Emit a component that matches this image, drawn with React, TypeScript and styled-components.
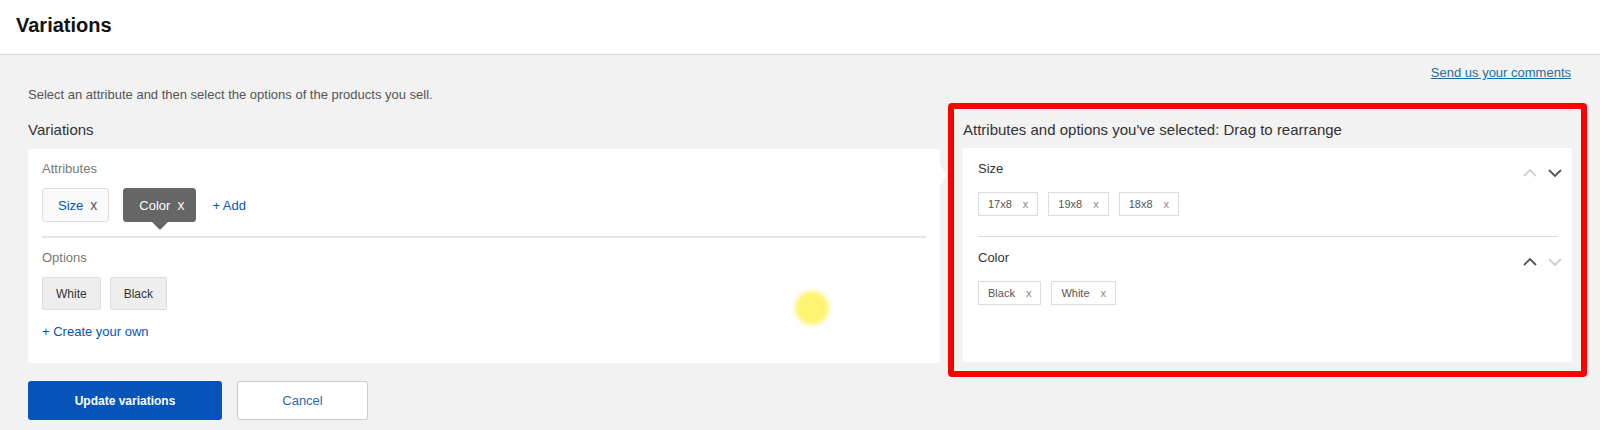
import styled, { createGlobalStyle } from "styled-components";

const GlobalStyle = createGlobalStyle`
	* {
		box-sizing: border-box;
	}

	body {
		margin: 0;
		font-family: "Liberation Sans", Arial, sans-serif;
		background: #f2f2f2;
	}
`;

const sizes = ["17x8", "19x8", "18x8"];
const colors = ["Black", "White"];

type ArrowProps = {
	up?: boolean;
	muted?: boolean;
};

const Chevron = ({ up, muted }: ArrowProps) => (
	<svg width="14" height="8" viewBox="0 0 14 8">
		<polyline
			points={up ? "1,7 7,1 13,7" : "1,1 7,7 13,1"}
			fill="none"
			stroke={muted ? "#cfcfcf" : "#555"}
			strokeWidth="1.8"
		/>
	</svg>
);

type GroupProps = {
	title: string;
	items: string[];
	first?: boolean;
};

const SelectedGroup = ({ title, items, first }: GroupProps) => (
	<Group $first={first}>
		<GroupHeader>
			<GroupTitle>{title}</GroupTitle>
			<Arrows>
				<Chevron up muted={first} />
				<Chevron muted={!first} />
			</Arrows>
		</GroupHeader>
		<ChipRow $gap={10}>
			{items.map((item) => (
				<ValueChip key={item}>
					{item}
					<SmallRemove>x</SmallRemove>
				</ValueChip>
			))}
		</ChipRow>
	</Group>
);

const App = () => {
	return (
		<Page>
			<GlobalStyle />
			<Header>
				<Title>Variations</Title>
			</Header>
			<Main>
				<LeftColumn>
					<Intro>Select an attribute and then select the options of the products you sell.</Intro>
					<Heading>Variations</Heading>
					<Panel>
						<PanelSection>
							<FieldLabel>Attributes</FieldLabel>
							<ChipRow $gap={14}>
								<AttributeChip>
									Size
									<Remove>x</Remove>
								</AttributeChip>
								<AttributeChip $active>
									Color
									<Remove $active>x</Remove>
								</AttributeChip>
								<AddLink>+ Add</AddLink>
							</ChipRow>
						</PanelSection>
						<Divider />
						<PanelSection $bottom>
							<FieldLabel>Options</FieldLabel>
							<ChipRow $gap={9}>
								<OptionChip>White</OptionChip>
								<OptionChip>Black</OptionChip>
							</ChipRow>
							<CreateLink>+ Create your own</CreateLink>
						</PanelSection>
						<PanelPointer />
					</Panel>
					<Actions>
						<PrimaryButton>Update variations</PrimaryButton>
						<SecondaryButton>Cancel</SecondaryButton>
					</Actions>
				</LeftColumn>
				<RightColumn>
					<CommentsLink href="#">Send us your comments</CommentsLink>
					<SelectedBox>
						<Heading>Attributes and options you've selected: Drag to rearrange</Heading>
						<SelectedCard>
							<SelectedGroup title="Size" items={sizes} first />
							<ThinDivider />
							<SelectedGroup title="Color" items={colors} />
						</SelectedCard>
					</SelectedBox>
				</RightColumn>
			</Main>
			<CursorHighlight />
		</Page>
	);
};

const Page = styled.div`
	position: relative;
	min-height: 100vh;
	background: #f2f2f2;
`;

const Header = styled.header`
	height: 55px;
	padding: 13px 16px 0;
	background: #fff;
	border-bottom: 1px solid #d6d6d6;
`;

const Title = styled.h1`
	margin: 0;
	font-size: 20px;
	line-height: 24px;
	font-weight: bold;
	color: #111;
`;

const Main = styled.main`
	display: grid;
	grid-template-columns: 912px 639px;
	column-gap: 8px;
	align-items: start;
	padding: 10px 13px 0 28px;
`;

const LeftColumn = styled.div`
	display: flex;
	flex-direction: column;
	padding-top: 22px;
`;

const RightColumn = styled.div`
	display: flex;
	flex-direction: column;
`;

const Intro = styled.p`
	margin: 0 0 18px;
	font-size: 13px;
	line-height: 16px;
	color: #555;
`;

const Heading = styled.h2`
	margin: 0;
	font-size: 15px;
	line-height: 18px;
	font-weight: normal;
	color: #333;
`;

const Panel = styled.div`
	position: relative;
	margin-top: 10px;
	background: #fff;
`;

const PanelSection = styled.div<{ $bottom?: boolean }>`
	display: flex;
	flex-direction: column;
	align-items: flex-start;
	padding: 12px 14px ${({ $bottom }) => ($bottom ? "23px" : "14px")};
`;

const PanelPointer = styled.div`
	position: absolute;
	top: 16px;
	right: -7px;
	width: 0;
	height: 0;
	border-top: 10px solid transparent;
	border-bottom: 10px solid transparent;
	border-left: 7px solid #fff;
`;

const FieldLabel = styled.div`
	font-size: 13px;
	line-height: 16px;
	color: #777;
	margin-bottom: 11px;
`;

const ChipRow = styled.div<{ $gap: number }>`
	display: flex;
	align-items: center;
	gap: ${({ $gap }) => $gap}px;
`;

const AttributeChip = styled.div<{ $active?: boolean }>`
	position: relative;
	display: flex;
	align-items: center;
	height: 34px;
	padding: 0 11px 0 15px;
	font-size: 13px;
	border: 1px solid ${({ $active }) => ($active ? "#666" : "#ddd")};
	border-radius: 3px;
	background: ${({ $active }) => ($active ? "#666" : "#fafafa")};
	color: ${({ $active }) => ($active ? "#fff" : "#0654ba")};

	&::after {
		content: "";
		display: ${({ $active }) => ($active ? "block" : "none")};
		position: absolute;
		left: 50%;
		bottom: -9px;
		margin-left: -8px;
		border-left: 8px solid transparent;
		border-right: 8px solid transparent;
		border-top: 8px solid #666;
	}
`;

const Remove = styled.span<{ $active?: boolean }>`
	margin-left: 7px;
	font-size: 14px;
	color: ${({ $active }) => ($active ? "#f2f2f2" : "#555")};
`;

const AddLink = styled.a`
	margin-left: 2px;
	font-size: 13px;
	color: #0654ba;
	text-decoration: none;
	cursor: pointer;
`;

const Divider = styled.div`
	height: 2px;
	margin: 0 14px;
	background: #e6e6e6;
`;

const OptionChip = styled.div`
	display: flex;
	align-items: center;
	height: 33px;
	padding: 0 13px;
	font-size: 12px;
	color: #333;
	background: #eee;
	border: 1px solid #ddd;
	border-radius: 2px;
`;

const CreateLink = styled.a`
	margin-top: 14px;
	font-size: 13px;
	line-height: 16px;
	color: #0654ba;
	text-decoration: none;
	cursor: pointer;
`;

const Actions = styled.div`
	display: flex;
	gap: 15px;
	margin-top: 18px;
`;

const PrimaryButton = styled.button`
	width: 194px;
	height: 39px;
	border: none;
	border-radius: 3px;
	background: #0654ba;
	color: #fff;
	font-family: inherit;
	font-size: 12px;
	font-weight: bold;
	cursor: pointer;
`;

const SecondaryButton = styled.button`
	width: 131px;
	height: 39px;
	border: 1px solid #ccc;
	border-radius: 3px;
	background: #fff;
	color: #2d6aa8;
	font-family: inherit;
	font-size: 13px;
	cursor: pointer;
`;

const CommentsLink = styled.a`
	align-self: flex-end;
	margin-right: 16px;
	font-size: 13px;
	line-height: 16px;
	color: #1b6ea3;
	text-decoration: underline;
`;

const SelectedBox = styled.section`
	margin-top: 22px;
	padding: 12px 9px 9px;
	border: 6px solid #ff0000;
	border-radius: 4px;
`;

const SelectedCard = styled.div`
	margin-top: 9px;
	min-height: 214px;
	background: #fff;
`;

const Group = styled.div<{ $first?: boolean }>`
	padding: 13px 14px ${({ $first }) => ($first ? "20px" : "0")} 15px;
`;

const GroupHeader = styled.div`
	display: flex;
	justify-content: space-between;
	align-items: flex-start;
	margin-bottom: 15px;
`;

const GroupTitle = styled.div`
	font-size: 13px;
	line-height: 16px;
	color: #333;
`;

const Arrows = styled.div`
	display: flex;
	gap: 11px;
	margin: 8px -4px 0 0;
`;

const ThinDivider = styled.div`
	height: 1px;
	margin: 0 14px 0 15px;
	background: #ddd;
`;

const ValueChip = styled.div`
	display: flex;
	align-items: center;
	height: 24px;
	padding: 0 9px;
	font-size: 11px;
	color: #555;
	background: #fff;
	border: 1px solid #ddd;
`;

const SmallRemove = styled.span`
	margin-left: 11px;
	color: #888;
`;

const CursorHighlight = styled.div`
	position: absolute;
	left: 795px;
	top: 291px;
	width: 34px;
	height: 34px;
	border-radius: 50%;
	background: #fff35a;
	opacity: 0.85;
	filter: blur(2px);
	pointer-events: none;
`;

export default App;
